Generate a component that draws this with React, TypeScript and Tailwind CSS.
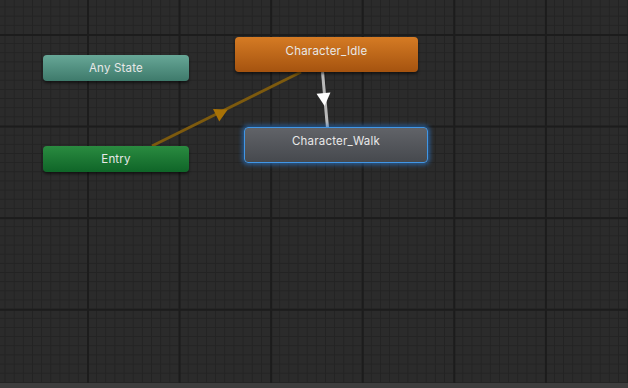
import React from 'react';

type NodeProps = {
  label: string;
  className: string;
};

function StateNode({ label, className }: NodeProps) {
  return (
    <div
      className={`absolute flex justify-center rounded-[4px] text-[11.5px] leading-[14px] tracking-[0.2px] text-[#e8e8e8] ${className}`}
    >
      {label}
    </div>
  );
}

function Transitions() {
  return (
    <svg className="pointer-events-none absolute inset-0" width={628} height={383}>
      {/* Entry -> Character_Idle */}
      <line x1={152} y1={146} x2={301} y2={72} stroke="#7d5a0e" strokeWidth={3} />
      <polygon points="-6,-7 -6,7 7,0" fill="#a87206" transform="translate(221.5 112.5) rotate(-26.4)" />
      {/* Character_Idle -> Character_Walk */}
      <line x1={322.5} y1={72} x2={327.5} y2={128} stroke="#b9b9b9" strokeWidth={3} />
      <polygon points="-6,-7 -6,7 7,0" fill="#ffffff" transform="translate(324 99) rotate(85)" />
    </svg>
  );
}

export default function App() {
  return (
    <div className="flex h-[388px] w-[628px] flex-col overflow-hidden bg-[#2b2b2b] font-['Inter','Noto_Sans',sans-serif]">
      <div className="relative flex-1 bg-[linear-gradient(to_right,#1c1c1c_2px,transparent_2px),linear-gradient(to_bottom,#1c1c1c_2px,transparent_2px),linear-gradient(to_right,#232323_1px,transparent_1px),linear-gradient(to_bottom,#232323_1px,transparent_1px)] bg-[size:91.6px_91.6px,91.6px_91.6px,9.16px_9.16px,9.16px_9.16px] bg-[position:-4.6px_0,0_34px,4.56px_0,0_6.5px]">
        <Transitions />
        <StateNode
          label="Any State"
          className="left-[43px] top-[55px] h-[26px] w-[146px] items-center bg-[linear-gradient(to_bottom,#67a797,#3e7a6b)] shadow-[0_2px_3px_rgba(0,0,0,0.55)]"
        />
        <StateNode
          label="Entry"
          className="left-[43px] top-[146px] h-[26px] w-[146px] items-center bg-[linear-gradient(to_bottom,#2a8b40,#0f6528)] shadow-[0_2px_3px_rgba(0,0,0,0.55)]"
        />
        <StateNode
          label="Character_Idle"
          className="left-[235px] top-[37px] h-[35px] w-[183px] pt-[7px] bg-[linear-gradient(to_bottom,#d57b24,#a5530f)] shadow-[0_2px_3px_rgba(0,0,0,0.55)]"
        />
        <StateNode
          label="Character_Walk"
          className="left-[244px] top-[127px] h-[36px] w-[184px] pt-[6px] border-[1.5px] border-[#4096e6] bg-[linear-gradient(to_bottom,#616368,#46494e)] shadow-[0_0_4px_2px_rgba(44,124,210,0.6)]"
        />
      </div>
      <div className="h-[5px] shrink-0 bg-[#3d3d3d]" />
    </div>
  );
}
